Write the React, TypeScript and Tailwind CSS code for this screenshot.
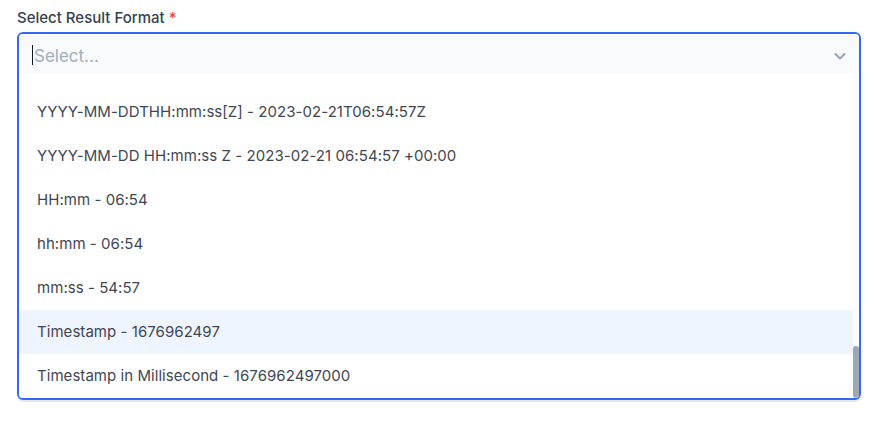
import React from "react";

const options = [
  "YYYY-MM-DDTHH:mm:ss[Z] - 2023-02-21T06:54:57Z",
  "YYYY-MM-DD HH:mm:ss Z - 2023-02-21 06:54:57 +00:00",
  "HH:mm - 06:54",
  "hh:mm - 06:54",
  "mm:ss - 54:57",
  "Timestamp - 1676962497",
  "Timestamp in Millisecond - 1676962497000",
];

export default function App() {
  return (
    <div
      className="w-[880px] h-[423px] bg-white px-[17px] pt-[8px]"
      style={{ fontFamily: "Inter, 'Noto Sans', sans-serif" }}
    >
      <label className="block text-[15px] leading-[19px] font-medium text-[#344054]">
        Select Result Format <span className="text-[#ef4444]">*</span>
      </label>
      <div className="mt-[5px] w-[844px] border-2 border-[#3169f5] rounded-[6px] overflow-hidden shadow-[0_3px_0_-1px_#e5e7eb]">
        <div className="h-[40px] bg-[#f9fafb] flex items-center pl-[13px] pr-[12px]">
          <span className="w-px h-[20px] mt-[2px] bg-[#111827]" />
          <span className="ml-[1px] mt-[3px] text-[17px] leading-[20px] text-[#a0aec0] flex-1">Select...</span>
          <svg width="14" height="14" viewBox="0 0 14 14" fill="none" className="mt-[3px]">
            <path d="M2.5 5l4.5 4.5L11.5 5" stroke="#94a3b8" strokeWidth="2" strokeLinecap="round" strokeLinejoin="round" />
          </svg>
        </div>
        <div className="relative h-[324px] overflow-hidden bg-white">
          <div className="pt-[16px] pr-[6px]">
            {options.map((o, i) => (
              <div
                key={o}
                className={`h-[44px] flex items-center pl-[18px] text-[15px] tracking-[0.05px] text-[#3f4653] ${
                  i === 5 ? "bg-[#eff5ff]" : ""
                }`}
              >
                {o}
              </div>
            ))}
          </div>
          <div className="absolute right-0 top-0 bottom-0 w-[6px] bg-[#fcfcfc]">
            <div className="absolute bottom-0 left-0 w-[6px] h-[52px] rounded-full bg-[#9ca6b6]" />
          </div>
        </div>
      </div>
    </div>
  );
}
